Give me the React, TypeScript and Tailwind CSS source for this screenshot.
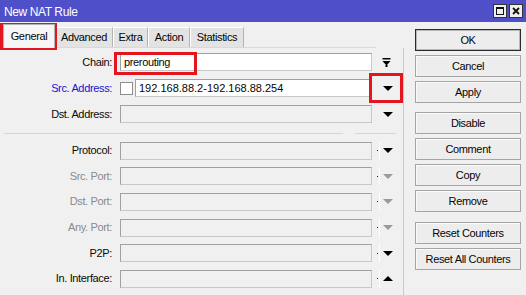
import React from "react";

// Winbox-style "New NAT Rule" dialog

const DownArrow = ({ gray = false }: { gray?: boolean }) => (
  <svg width="10" height="5" viewBox="0 0 10 5" className="block">
    <polygon points="0,0 10,0 5,5" fill={gray ? "#9a9a9a" : "#000"} />
  </svg>
);

const UpArrow = () => (
  <svg width="10" height="5" viewBox="0 0 10 5" className="block">
    <polygon points="0,5 10,5 5,0" fill="#000" />
  </svg>
);

const CollapseIcon = () => (
  <svg width="9" height="9" viewBox="0 0 9 9" className="block">
    <rect x="0.5" y="0" width="8" height="1.5" fill="#000" />
    <polygon points="0.5,3 8.5,3 4.5,7.5" fill="#000" />
    <rect x="3.5" y="7" width="2" height="2" fill="#000" />
  </svg>
);

const Field = ({ children, white = false, className = "" }: { children?: React.ReactNode; white?: boolean; className?: string }) => (
  <div
    className={`h-[18px] border border-t-[#a0a0a0] border-l-[#a0a0a0] border-r-[#c8c8c8] border-b-[#c8c8c8] flex items-center px-[2px] ${white ? "bg-white" : "bg-[#f0f0f0]"} ${className}`}
  >
    {children}
  </div>
);

type Row = { label: string; tone: "dark" | "blue" | "gray"; arrow: "down" | "gray" | "up" };

const lowerRows: Row[] = [
  { label: "Protocol:", tone: "dark", arrow: "down" },
  { label: "Src. Port:", tone: "gray", arrow: "gray" },
  { label: "Dst. Port:", tone: "gray", arrow: "gray" },
  { label: "Any. Port:", tone: "gray", arrow: "gray" },
  { label: "P2P:", tone: "dark", arrow: "down" },
  { label: "In. Interface:", tone: "dark", arrow: "up" },
];

const toneClass: Record<string, string> = {
  dark: "text-[#0a0a0a]",
  blue: "text-[#1515d0]",
  gray: "text-[#8a8a8a]",
};

const tabs = [
  { name: "Advanced", w: "w-[58px]" },
  { name: "Extra", w: "w-[35px]" },
  { name: "Action", w: "w-[42px]" },
  { name: "Statistics", w: "w-[54px]" },
];

const Btn = ({ children, main = false }: { children: React.ReactNode; main?: boolean }) => (
  <div
    className={`h-[22px] w-[106px] flex items-center justify-center text-[#050505] bg-[#ededed] border ${
      main ? "border-[#2a2a2a] shadow-[inset_0_0_0_1px_#b8b8b8]" : "border-[#a5a5a5] shadow-[inset_1px_1px_0_#fafafa]"
    }`}
  >
    {children}
  </div>
);

export default function App() {
  return (
    <div className="relative w-[526px] h-[295px] overflow-hidden bg-[#f0f0f0] font-['Liberation_Sans',Arial,sans-serif] text-[11px] tracking-[-0.35px] leading-none select-none">
      {/* title bar */}
      <div className="h-[22px] bg-[#4f50c9] flex items-center pl-[4px] pr-[3px]">
        <span className="text-white text-[12px] tracking-[-0.4px] pt-[1px]">New NAT Rule</span>
        <div className="ml-auto flex gap-[2px]">
          <div className="w-[14px] h-[14px] bg-[#efefef] border border-[#333] flex items-center justify-center">
            <div className="w-[8px] h-[8px] border border-[#111] border-t-2" />
          </div>
          <div className="w-[14px] h-[14px] bg-[#efefef] border border-[#333] flex items-center justify-center">
            <svg width="8" height="8" viewBox="0 0 8 8">
              <path d="M1 1 L7 7 M7 1 L1 7" stroke="#111" strokeWidth="1.8" />
            </svg>
          </div>
        </div>
      </div>

      <div className="flex">
        {/* left: tabs + form */}
        <div className="w-[404px] flex flex-col">
          <div className="h-[26px] flex items-end pl-[3px] border-b border-[#d9d9d9] mr-[28px]">
            <div className="h-[24px] w-[52px] -mb-px bg-[#f6f6f6] border border-b-0 border-[#b5b5b5] flex items-center justify-center text-[#050505] z-10">
              General
            </div>
            {tabs.map((t) => (
              <div
                key={t.name}
                className={`h-[20px] ${t.w} bg-[#e3e3e3] border-t border-l border-white border-r border-r-[#b3b3b3] flex items-center justify-center text-[#050505]`}
              >
                {t.name}
              </div>
            ))}
          </div>

          <div className="h-[247px] border-r border-[#c9c9c9] pt-[1px]">
            {/* Chain */}
            <div className="h-[26px] flex items-center">
              <div className={`w-[112px] text-right ${toneClass.dark}`}>Chain:</div>
              <Field white className="ml-[8px] w-[252px]">
                <span className="text-[#050505] pl-[1px]">prerouting</span>
              </Field>
              <div className="pl-[10px]">
                <CollapseIcon />
              </div>
            </div>
            {/* Src. Address */}
            <div className="h-[26px] flex items-center">
              <div className={`w-[112px] text-right ${toneClass.blue}`}>Src. Address:</div>
              <div className="ml-[8px] w-[13px] h-[13px] bg-white border border-[#8e8e8e]" />
              <Field white className="ml-[2px] w-[237px]">
                <span className="text-[#050505] tracking-normal pl-[1px]">192.168.88.2-192.168.88.254</span>
              </Field>
              <div className="pl-[11px]">
                <DownArrow />
              </div>
            </div>
            {/* Dst. Address */}
            <div className="h-[26px] flex items-center">
              <div className={`w-[112px] text-right ${toneClass.dark}`}>Dst. Address:</div>
              <Field className="ml-[8px] w-[252px]" />
              <div className="pl-[11px]">
                <DownArrow />
              </div>
            </div>

            <div className="mt-[6px] flex">
              <div className="ml-[4px] w-[339px] h-px bg-[#d6d6d6]" />
              <div className="ml-[12px] w-[41px] h-px bg-[#d6d6d6]" />
            </div>

            <div className="mt-[4px]">
              {lowerRows.map((r) => (
                <div key={r.label} className="h-[25.6px] flex items-center">
                  <div className={`w-[112px] text-right ${toneClass[r.tone]}`}>{r.label}</div>
                  <Field className="ml-[8px] w-[252px]" />
                  <div className="pl-[5px] flex items-center">
                    <div className="w-px h-px bg-[#222]" />
                    <div className="ml-px w-px h-[18px] bg-white" />
                    <div className="ml-[3px]">
                      {r.arrow === "up" ? <UpArrow /> : <DownArrow gray={r.arrow === "gray"} />}
                    </div>
                  </div>
                </div>
              ))}
            </div>
          </div>
        </div>

        {/* right: buttons */}
        <div className="ml-[11px] pt-[7px] flex flex-col gap-[4px]">
          <Btn main>OK</Btn>
          <Btn>Cancel</Btn>
          <Btn>Apply</Btn>
          <div className="mt-[5px]">
            <Btn>Disable</Btn>
          </div>
          <Btn>Comment</Btn>
          <Btn>Copy</Btn>
          <Btn>Remove</Btn>
          <div className="mt-[6px]">
            <Btn>Reset Counters</Btn>
          </div>
          <Btn>Reset All Counters</Btn>
        </div>
      </div>

      {/* red highlight boxes */}
      <div className="absolute left-0 top-[23px] w-[57px] h-[27px] border-[3px] border-[#e3161d] pointer-events-none" />
      <div className="absolute left-[114px] top-[52px] w-[83px] h-[23px] border-[3px] border-[#e3161d] pointer-events-none" />
      <div className="absolute left-[369px] top-[73px] w-[34px] h-[30px] border-[3px] border-[#e3161d] pointer-events-none" />
    </div>
  );
}
